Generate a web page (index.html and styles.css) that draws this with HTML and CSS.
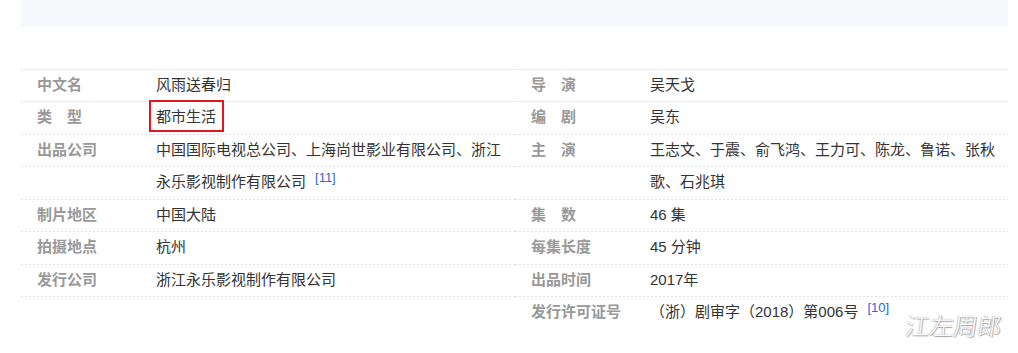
FILE: index.html
```html
<!DOCTYPE html>
<html lang="zh-CN">
<head>
<meta charset="utf-8">
<title>风雨送春归</title>
<link rel="stylesheet" href="styles.css">
</head>
<body>
<div class="page">
  <div class="top-panel"></div>
  <div class="basic-info">
    <dl class="info-col">
      <div class="row"><dt class="label">中文名</dt><dd class="value">风雨送春归</dd></div>
      <div class="row"><dt class="label">类　型</dt><dd class="value"><span class="marked">都市生活</span></dd></div>
      <div class="row"><dt class="label">出品公司</dt><dd class="value">中国国际电视总公司、上海尚世影业有限公司、浙江</dd></div>
      <div class="row"><dt class="label"></dt><dd class="value">永乐影视制作有限公司<sup class="ref">[11]</sup></dd></div>
      <div class="row"><dt class="label">制片地区</dt><dd class="value">中国大陆</dd></div>
      <div class="row"><dt class="label">拍摄地点</dt><dd class="value">杭州</dd></div>
      <div class="row"><dt class="label">发行公司</dt><dd class="value">浙江永乐影视制作有限公司</dd></div>
    </dl>
    <dl class="info-col">
      <div class="row"><dt class="label">导　演</dt><dd class="value">吴天戈</dd></div>
      <div class="row"><dt class="label">编　剧</dt><dd class="value">吴东</dd></div>
      <div class="row"><dt class="label">主　演</dt><dd class="value">王志文、于震、俞飞鸿、王力可、陈龙、鲁诺、张秋</dd></div>
      <div class="row"><dt class="label"></dt><dd class="value">歌、石兆琪</dd></div>
      <div class="row"><dt class="label">集　数</dt><dd class="value">46 集</dd></div>
      <div class="row"><dt class="label">每集长度</dt><dd class="value">45 分钟</dd></div>
      <div class="row"><dt class="label">出品时间</dt><dd class="value">2017年</dd></div>
      <div class="row row-last"><dt class="label">发行许可证号</dt><dd class="value">（浙）剧审字（2018）第006号<sup class="ref">[10]</sup></dd></div>
    </dl>
  </div>
  <div class="watermark">江左周郎</div>
</div>
</body>
</html>
```

FILE: styles.css
```css
html, body {
  margin: 0;
  padding: 0;
  background: #ffffff;
}

.page {
  position: relative;
  width: 1018px;
  height: 353px;
  overflow: hidden;
  font-family: "Liberation Sans", "Noto Sans CJK SC", sans-serif;
  font-size: 15px;
  color: #333333;
}

.top-panel {
  height: 27px;
  margin: 0 10px 0 21px;
  background: #f7f9fc;
}

.basic-info {
  display: flex;
  margin: 42px 10px 0 21px;
}

.info-col {
  flex: 0 0 494px;
  margin: 0;
  padding: 0;
  background-image: linear-gradient(to right, #e2e2e2 50%, transparent 50%);
  background-size: 4px 1px;
  background-repeat: repeat-x;
  background-position: 0 0;
  padding-top: 1px;
}

.info-col + .info-col {
  flex: 1 1 auto;
}

.row {
  display: flex;
  height: 31.43px;
  line-height: 30.5px;
  padding-bottom: 1px;
  background-image: linear-gradient(to right, #e2e2e2 50%, transparent 50%);
  background-size: 4px 1px;
  background-repeat: repeat-x;
  background-position: 0 100%;
}

.row-last {
  background-image: none;
}

.label {
  flex: 0 0 119px;
  margin: 0;
  padding-left: 16px;
  font-weight: bold;
  color: #999999;
  white-space: nowrap;
}

.value {
  margin: 0;
  white-space: nowrap;
  color: #333333;
}

.marked {
  position: relative;
  display: inline-block;
}

.marked::after {
  content: "";
  position: absolute;
  left: -7px;
  right: -8px;
  top: -2px;
  height: 32px;
  border: 2px solid #e2161f;
  box-sizing: border-box;
}

.ref {
  font-size: 13px;
  line-height: 1;
  color: #3366cc;
  vertical-align: 5px;
  margin-left: 9px;
}

.watermark {
  position: absolute;
  left: 906px;
  top: 307px;
  font-family: "Noto Sans CJK SC", sans-serif;
  font-size: 24px;
  font-weight: 300;
  color: #ffffff;
  transform: skewX(-8deg);
  text-shadow: 1px 1px 1px #a0a0a0, -1px 0 1px #c8c8c8, 0 0 1px #b0b0b0;
}
```
